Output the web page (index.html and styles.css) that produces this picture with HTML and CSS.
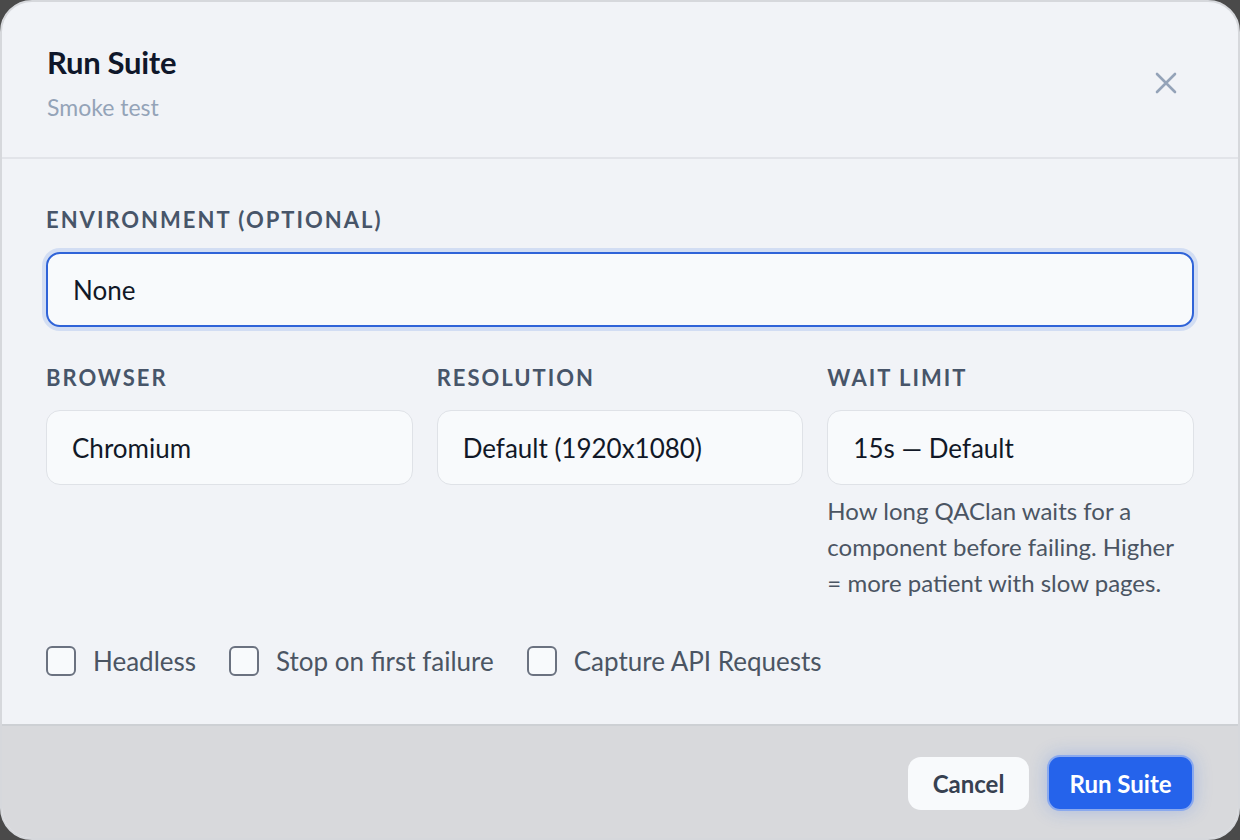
FILE: index.html
```html
<!DOCTYPE html>
<html lang="en">
<head>
<meta charset="utf-8">
<title>Run Suite</title>
<link rel="stylesheet" href="styles.css">
</head>
<body>
<div class="modal">
  <header class="modal-header">
    <div class="titles">
      <h1 class="title">Run Suite</h1>
      <p class="subtitle">Smoke test</p>
    </div>
    <button class="close" aria-label="Close">
      <svg viewBox="0 0 24 24" width="24" height="24"><path d="M3 3 L21 21 M21 3 L3 21" stroke="#94a3b8" stroke-width="2.6" stroke-linecap="round" fill="none"/></svg>
    </button>
  </header>
  <main class="modal-body">
    <div class="field">
      <label class="label">Environment (optional)</label>
      <div class="input focused">None</div>
    </div>
    <div class="grid">
      <div class="field">
        <label class="label">Browser</label>
        <div class="input">Chromium</div>
      </div>
      <div class="field">
        <label class="label">Resolution</label>
        <div class="input">Default (1920x1080)</div>
      </div>
      <div class="field">
        <label class="label">Wait Limit</label>
        <div class="input">15s — Default</div>
        <p class="help">How long QAClan waits for a component before failing. Higher = more patient with slow pages.</p>
      </div>
    </div>
    <div class="checks">
      <label class="check"><span class="box"></span>Headless</label>
      <label class="check"><span class="box"></span>Stop on first failure</label>
      <label class="check"><span class="box"></span>Capture API Requests</label>
    </div>
  </main>
  <footer class="modal-footer">
    <button class="btn btn-cancel">Cancel</button>
    <button class="btn btn-primary">Run Suite</button>
  </footer>
</div>
</body>
</html>
```
FILE: styles.css
```css
* { box-sizing: border-box; }
html, body { margin: 0; padding: 0; }
body {
  background: #4a4a4a;
  font-family: "Lato", "Noto Sans", sans-serif;
  width: 1240px;
  height: 840px;
  overflow: hidden;
}
.modal {
  width: 1240px;
  height: 840px;
  border: 2px solid #d6d8dc;
  border-radius: 32px;
  background: #f1f3f7;
  overflow: hidden;
  display: flex;
  flex-direction: column;
}
.modal-header {
  display: flex;
  align-items: center;
  justify-content: space-between;
  padding: 42px 60px 36px 45px;
  border-bottom: 2px solid #e2e4e9;
}
.title {
  margin: 0;
  font-size: 31px;
  line-height: 36px;
  font-weight: 700;
  color: #0f172a;
  letter-spacing: -0.3px;
}
.subtitle {
  margin: 13px 0 0;
  font-size: 23px;
  line-height: 28px;
  color: #94a3b8;
}
.close {
  border: 0;
  background: none;
  padding: 0;
  width: 24px;
  height: 24px;
  display: flex;
}
.modal-body {
  flex: 1;
  padding: 47px 44px 0 44px;
  display: flex;
  flex-direction: column;
}
.field { display: flex; flex-direction: column; }
.label {
  font-size: 22px;
  line-height: 28px;
  font-weight: 700;
  letter-spacing: 2px;
  text-transform: uppercase;
  color: #475569;
  margin-bottom: 18px;
}
.input {
  height: 75px;
  border: 1.5px solid #dfe2e7;
  border-radius: 14px;
  background: #f8fafc;
  padding: 0 25px;
  display: flex;
  align-items: center;
  font-size: 26px;
  color: #111827;
}
.input.focused {
  border: 2px solid #2f63d8;
  box-shadow: 0 0 0 4px #d2ddf3;
}
.grid {
  margin-top: 37px;
  display: grid;
  grid-template-columns: 1fr 1fr 1fr;
  column-gap: 24px;
  align-items: start;
}
.help {
  margin: 8px 0 0;
  padding-right: 12px;
  font-size: 24px;
  line-height: 36px;
  color: #4b5563;
}
.checks {
  margin-top: 44px;
  display: flex;
  gap: 33px;
  align-items: center;
}
.check {
  display: flex;
  align-items: center;
  gap: 17px;
  font-size: 26px;
  color: #4b5563;
}
.box {
  width: 30px;
  height: 30px;
  border: 2px solid #6b7280;
  border-radius: 6px;
  background: #f8fafc;
}
.modal-footer {
  height: 114px;
  border-top: 2px solid #cdd0d4;
  background: #d8d9dc;
  display: flex;
  align-items: center;
  justify-content: flex-end;
  gap: 18px;
  padding: 2px 44px 0;
}
.btn {
  font-family: inherit;
  font-size: 24px;
  font-weight: 700;
  border-radius: 13px;
  cursor: pointer;
}
.btn-cancel {
  width: 121px;
  height: 53px;
  border: 0;
  background: #f8fafc;
  color: #374151;
}
.btn-primary {
  width: 147px;
  height: 56px;
  border: 2px solid #8aa9ee;
  background: #2563eb;
  color: #ffffff;
  box-shadow: 0 0 18px rgba(37, 99, 235, 0.25);
}
```
